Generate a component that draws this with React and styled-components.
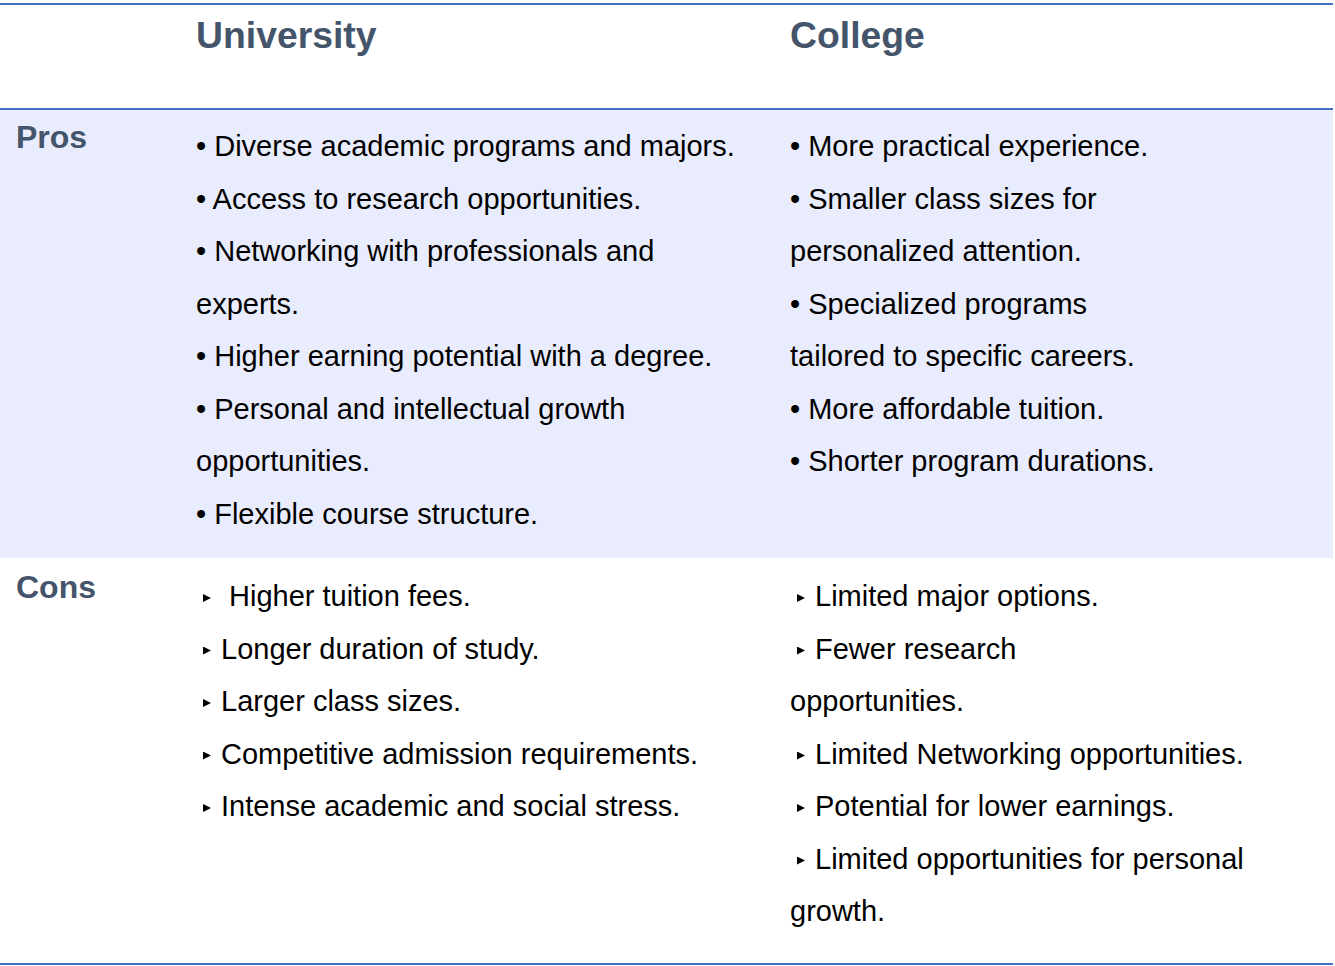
import React from "react";
import styled, { createGlobalStyle } from "styled-components";

const Global = createGlobalStyle`
  html, body { margin: 0; padding: 0; background: #ffffff; }
  body { font-family: "Liberation Sans", Arial, sans-serif; }
`;

const LINE = "#4472C4";
const HEAD = "#44546A";

const Table = styled.div`
  width: 1333px;
  margin-top: 3px;
  border-top: 2px solid ${LINE};
  border-bottom: 2px solid ${LINE};
`;

const Grid = styled.div`
  display: grid;
  grid-template-columns: 180px 594px 1fr;
  box-sizing: border-box;
  height: ${(p) => p.$h}px;
  padding-top: ${(p) => p.$pt}px;
  background: ${(p) => p.$bg || "transparent"};
  border-bottom: ${(p) => (p.$line ? `2px solid ${LINE}` : "none")};
`;

const HeadCell = styled.div`
  padding: 0 16px;
  font-weight: 700;
  font-size: 37.33px;
  line-height: normal;
  color: ${HEAD};
`;

const Label = styled.div`
  padding: 0 16px;
  font-weight: 700;
  font-size: 32px;
  line-height: normal;
  color: ${HEAD};
`;

const Body = styled.div`
  padding: 1px 16px 0;
  font-size: 29px;
  line-height: 52.5px;
  color: #000000;
`;

const Item = styled.div`
  white-space: nowrap;
`;

const Tri = styled.span`
  display: inline-block;
  width: 8px;
  height: 8px;
  background: #000;
  clip-path: polygon(0 0, 100% 50%, 0 100%);
  margin-left: 7px;
  margin-right: ${(p) => (p.$wide ? 18 : 10)}px;
  vertical-align: 4px;
`;

const pros = {
  uni: [
    ["Diverse academic programs and majors."],
    ["Access to research opportunities."],
    ["Networking with professionals and", "experts."],
    ["Higher earning potential with a degree."],
    ["Personal and intellectual growth", "opportunities."],
    ["Flexible course structure."],
  ],
  col: [
    ["More practical experience."],
    ["Smaller class sizes for", "personalized attention."],
    ["Specialized programs", "tailored to specific careers."],
    ["More affordable tuition."],
    ["Shorter program durations."],
  ],
};

const cons = {
  uni: [
    ["Higher tuition fees."],
    ["Longer duration of study."],
    ["Larger class sizes."],
    ["Competitive admission requirements."],
    ["Intense academic and social stress."],
  ],
  col: [
    ["Limited major options."],
    ["Fewer research", "opportunities."],
    ["Limited Networking opportunities."],
    ["Potential for lower earnings."],
    ["Limited opportunities for personal", "growth."],
  ],
};

function DotList({ items }) {
  return items.map((lines, i) => (
    <React.Fragment key={i}>
      <Item>{"\u2022 " + lines[0]}</Item>
      {lines.slice(1).map((l, j) => (
        <Item key={j}>{l}</Item>
      ))}
    </React.Fragment>
  ));
}

function TriList({ items, firstWide }) {
  return items.map((lines, i) => (
    <React.Fragment key={i}>
      <Item>
        <Tri $wide={firstWide && i === 0} />
        {lines[0]}
      </Item>
      {lines.slice(1).map((l, j) => (
        <Item key={j}>{l}</Item>
      ))}
    </React.Fragment>
  ));
}

export default function App() {
  return (
    <>
      <Global />
      <Table>
        <Grid $h={105} $pt={9} $line>
          <HeadCell />
          <HeadCell>University</HeadCell>
          <HeadCell>College</HeadCell>
        </Grid>
        <Grid $h={448} $pt={9} $bg="#E9ECFC">
          <Label>Pros</Label>
          <Body>
            <DotList items={pros.uni} />
          </Body>
          <Body>
            <DotList items={pros.col} />
          </Body>
        </Grid>
        <Grid $h={405} $pt={11}>
          <Label>Cons</Label>
          <Body>
            <TriList items={cons.uni} firstWide />
          </Body>
          <Body>
            <TriList items={cons.col} />
          </Body>
        </Grid>
      </Table>
    </>
  );
}
